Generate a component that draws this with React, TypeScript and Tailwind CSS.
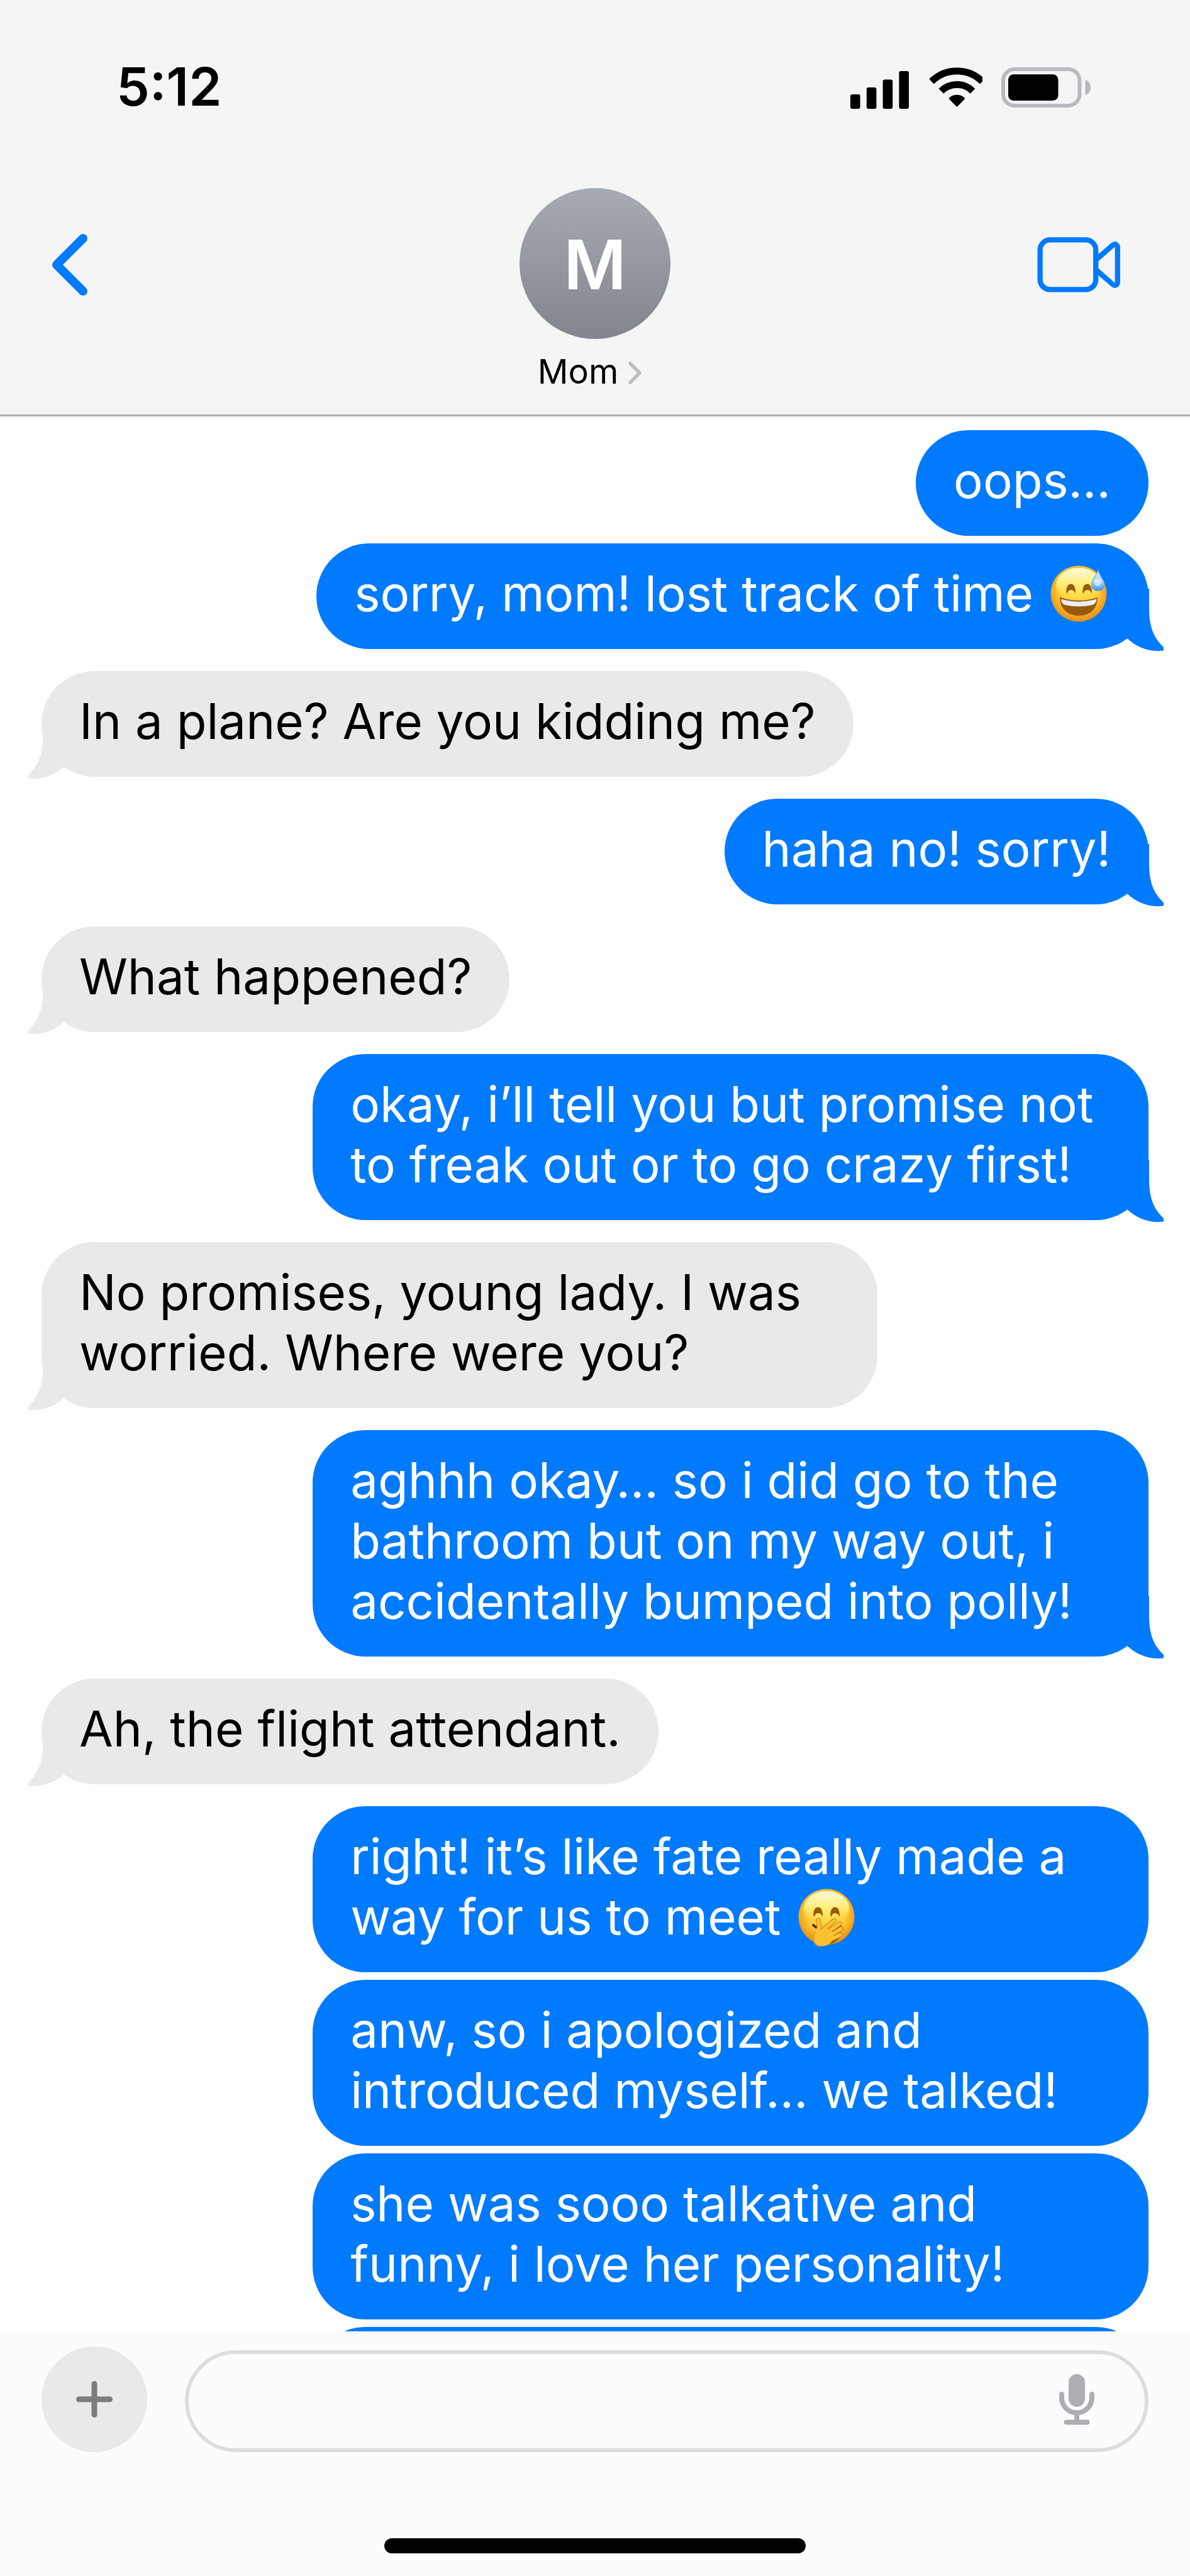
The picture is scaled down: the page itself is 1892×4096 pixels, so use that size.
import type { ReactNode } from "react";
import clsx from "clsx";

type Message = {
  id: number;
  from: "me" | "mom";
  tail?: boolean;
  body: ReactNode;
};

function EyeArc({ x }: { x: number }) {
  return (
    <path
      transform={`translate(${x} 0)`}
      d="M.3 43C0 34 3 29.5 7.7 29.5 12.5 29.5 15.3 35 15 45 13.5 41 11 39 8 39 5 39 2.500 41 1.800 45Z"
      fill="#965a0c"
    />
  );
}

function Face({ id }: { id: string }) {
  return (
    <>
      <defs>
        <radialGradient id={`${id}-base`} cx="0.5" cy="0.42" r="0.6">
          <stop offset="0" stopColor="#ffe04a" />
          <stop offset="0.6" stopColor="#fdcb34" />
          <stop offset="0.82" stopColor="#f4a31f" />
          <stop offset="1" stopColor="#e08a10" />
        </radialGradient>
        <linearGradient id={`${id}-shine`} x1="0" y1="0" x2="0" y2="1">
          <stop offset="0" stopColor="#fffbe0" />
          <stop offset="0.45" stopColor="#fff38a" stopOpacity="0.85" />
          <stop offset="1" stopColor="#ffe14d" stopOpacity="0" />
        </linearGradient>
      </defs>
      <circle cx="46" cy="45" r="44.500" fill={`url(#${id}-base)`} />
      <ellipse cx="46" cy="31" rx="36" ry="27" fill={`url(#${id}-shine)`} />
    </>
  );
}

function SweatSmile() {
  return (
    <svg viewBox="-4 0 101 92" role="img" aria-label="😅" className="inline h-[92px] w-[101px] align-[-19px]">
      <Face id="sweat" />
      <defs>
        <linearGradient id="sweat-drop" x1="0" y1="0" x2="0" y2="1">
          <stop offset="0" stopColor="#cfe8ff" />
          <stop offset="0.55" stopColor="#b5dcff" />
          <stop offset="1" stopColor="#3d8ff0" />
        </linearGradient>
      </defs>
      <EyeArc x={26} />
      <EyeArc x={52} />
      <path d="M16 50.500C34 57.500 58 57.500 76 51 76 69 64 80 46 80S16 68 16 50.500Z" fill="#965a0c" />
      <path d="M18 53.500C36 59 56 59 74.500 53.500 74 60 71 62 67 63 54 66 38 66 25 63 21 62 18.500 60 18 53.500Z" fill="#ececf0" />
      <path d="M76.700 6.300C79 17 86.700 22 86.700 31 86.700 37 82.500 40.500 76.700 40.500S66.700 37 66.700 31C66.700 22 74.500 17 76.700 6.300Z" fill="url(#sweat-drop)" stroke="#4a94ea" strokeWidth="1" />
      <ellipse cx="76" cy="27" rx="5" ry="6" fill="#e4f2ff" opacity="0.7" />
    </svg>
  );
}

const fingers = ["M33 50.500 35.500 68", "M38 68 58 51", "M44 72 67 56", "M48 77 69 64", "M50 82 68 73.500"];

function HandOverMouth() {
  return (
    <svg viewBox="-4 0 101 92" role="img" aria-label="🤭" className="inline h-[92px] w-[101px] align-[-19px]">
      <Face id="hand" />
      <EyeArc x={25} />
      <EyeArc x={52} />
      <path d="M25 58 30 62M54 68 68 59" stroke="#5a3208" strokeWidth="4" strokeLinecap="round" />
      <path d="M50 89C58 87 64 82 68 77L58 74Z" fill="#965a0c" />
      {fingers.map((d) => (
        <g key={d} strokeLinecap="round">
          <path d={d} stroke="#c77a12" strokeWidth="7.500" />
          <path d={d} stroke="#fcc238" strokeWidth="5.500" />
        </g>
      ))}
      <path d="M32.500 60C28 66 25 72 25.500 80 26 88 31 91.500 39 91.500 49 91.500 54 86 58 78L54 66 44 63 37 68Z" fill="#fcc033" />
      <path d="M28 68C25 74 24 82 27.500 87 30 91 35 92 40 91.500" fill="none" stroke="#e0941c" strokeWidth="1.500" />
    </svg>
  );
}

const messages: Message[] = [
  { id: 1, from: "me", body: "oops…" },
  { id: 2, from: "me", tail: true, body: <>sorry, mom! lost track of time <SweatSmile /></> },
  { id: 3, from: "mom", tail: true, body: "In a plane? Are you kidding me?" },
  { id: 4, from: "me", tail: true, body: "haha no! sorry!" },
  { id: 5, from: "mom", tail: true, body: "What happened?" },
  { id: 6, from: "me", tail: true, body: "okay, i’ll tell you but promise not to freak out or to go crazy first!" },
  { id: 7, from: "mom", tail: true, body: "No promises, young lady. I was worried. Where were you?" },
  { id: 8, from: "me", tail: true, body: "aghhh okay… so i did go to the bathroom but on my way out, i accidentally bumped into polly!" },
  { id: 9, from: "mom", tail: true, body: "Ah, the flight attendant." },
  { id: 10, from: "me", body: <>right! it’s like fate really made a way for us to meet <HandOverMouth /></> },
  { id: 11, from: "me", body: "anw, so i apologized and introduced myself… we talked!" },
  { id: 12, from: "me", body: "she was sooo talkative and funny, i love her personality!" },
];

function Tail({ mine }: { mine: boolean }) {
  return (
    <svg
      viewBox="0 0 84 99"
      aria-hidden="true"
      className={clsx(
        "absolute -bottom-[3px] h-[99px] w-[84px]",
        mine ? "-right-6 fill-[#007aff]" : "-left-[21px] -scale-x-100 fill-[#e9e9eb]",
      )}
    >
      <path d="M61 0V31C61 62 69 79 84 93V98.500C62 101 42 94 26 79L14 66V0Z" />
    </svg>
  );
}

function Bubble({ from, tail, body }: Omit<Message, "id">) {
  const mine = from === "me";
  return (
    <li
      className={clsx(
        "relative max-w-[75.5%] rounded-[84px] px-[60px] pt-8 pb-10",
        mine ? "self-end bg-[#007aff] text-white" : "self-start bg-[#e9e9eb] text-black",
        tail ? "mb-[35px]" : "mb-3",
      )}
    >
      {tail && <Tail mine={mine} />}
      <p className="relative">{body}</p>
    </li>
  );
}

function StatusBar() {
  return (
    <div className="flex h-[280px] items-center justify-between pr-[158px] pl-[185px]">
      <time className="pb-1 text-[84px] leading-[96px] font-semibold">5:12</time>
      <div className="flex items-center">
        <svg viewBox="0 0 93 66" className="h-[66px] w-[93px]" aria-label="Signal" role="img">
          <rect x="0" y="43" width="15.600" height="23" rx="3" />
          <rect x="25.800" y="32" width="15.600" height="34" rx="3" />
          <rect x="51.600" y="19.500" width="15.600" height="46.500" rx="3" />
          <rect x="77.400" y="6" width="15.600" height="60" rx="3" />
        </svg>
        <svg viewBox="0 0 84 66" className="ml-[33px] h-[66px] w-[84px]" aria-label="Wi-Fi" role="img">
          <g fill="none" stroke="#000" strokeWidth="11">
            <path d="M3 22.600A57.200 57.200 0 0 1 83.800 22.600" />
            <path d="M18.300 37.900A35.500 35.500 0 0 1 68.500 37.900" />
          </g>
          <path d="M43.400 62 32 50.500C31.300 49.800 31.400 49 32.100 48.500 38.500 43 48.300 43 54.700 48.500 55.400 49 55.500 49.800 54.800 50.500Z" stroke="#000" strokeWidth="1.500" strokeLinejoin="round" />
        </svg>
        <svg viewBox="0 0 142 66" className="ml-[30px] h-[66px] w-[142px]" aria-label="Battery" role="img">
          <rect x="3" y="3" width="121.500" height="58" rx="18" fill="none" stroke="#b9bac0" strokeWidth="6" />
          <rect x="11" y="11.300" width="79.500" height="41.700" rx="8.500" />
          <path d="M133.500 19.700C139 21.500 142 26 142 32S139 42.500 133.500 44.300Z" fill="#b9bac0" />
        </svg>
      </div>
    </div>
  );
}

function Header() {
  return (
    <header className="bg-[#f5f5f5] pb-[3px]">
      <StatusBar />
      <div className="grid grid-cols-[1fr_auto_1fr] border-b-3 border-[#acb0b5] pt-[19px] pr-[107px] pb-8 pl-[79px]">
        <div className="flex h-[240px] items-center pt-1">
          <button type="button" aria-label="Back" className="-mr-7 text-[#007aff]">
            <svg viewBox="79 369 64 106" className="h-[106px] w-16" fill="none" stroke="currentColor" strokeWidth="14" strokeLinecap="round" strokeLinejoin="round">
              <path d="M132 380 90 422 132 464" />
            </svg>
          </button>
        </div>
        <div className="ml-7 flex flex-col items-center">
          <div className="grid size-[240px] place-items-center rounded-full bg-linear-to-b from-[#a7abb4] to-[#83858e] text-[108px] leading-none font-semibold text-white">
            <span className="pt-1">M</span>
          </div>
          <button type="button" className="mt-4 flex items-center text-[54px] leading-[72px]">
            Mom
            <svg viewBox="0 0 38 40" aria-hidden="true" className="mt-1 ml-4 h-10 w-[38px]" fill="none" stroke="#bebebe" strokeWidth="5.500" strokeLinecap="round" strokeLinejoin="round">
              <path d="M3 5 18 20 3 35" />
            </svg>
          </button>
        </div>
        <div className="flex h-[240px] items-center justify-end pt-1">
          <button type="button" aria-label="FaceTime" className="text-[#007aff]">
            <svg viewBox="1649 375 140 96" className="h-24 w-[140px]" fill="none" stroke="currentColor" strokeWidth="8.300" strokeLinejoin="round">
              <rect x="1657.600" y="383.400" width="88.600" height="79" rx="16" />
              <path d="M1746 415.500 1773 392C1777 388.500 1780.800 391 1780.800 396V450C1780.800 455 1777 457.500 1773 454L1746 430.500" />
            </svg>
          </button>
        </div>
      </div>
    </header>
  );
}

function Composer() {
  return (
    <footer className="bg-[#fcfcfc] px-[66px] pt-6 pb-9">
      <form className="flex items-end gap-[60px]" onSubmit={(e) => e.preventDefault()}>
        <button type="button" aria-label="Add attachment" className="grid size-[168px] shrink-0 place-items-center rounded-full bg-[#e9e9eb]">
          <svg viewBox="0 0 60 60" className="size-[60px]" stroke="#7d7d80" strokeWidth="9" strokeLinecap="round">
            <path d="M30 5.500V54.500M5.500 30H54.500" />
          </svg>
        </button>
        <div className="flex h-[162px] flex-1 items-center rounded-full border-6 border-[#ddd] pr-20 pl-[60px]">
          <input type="text" aria-label="Message" className="h-full min-w-0 flex-1 bg-transparent text-[78px] outline-none" />
          <button type="button" aria-label="Dictate">
            <svg viewBox="0 0 56 86" className="h-[86px] w-14" fill="none" stroke="#acaeb4" strokeLinecap="round">
              <rect x="15" y="0" width="26" height="52" rx="13" fill="#acaeb4" stroke="none" />
              <path d="M4 32V37.500A24 24 0 0 0 52 37.500V32M28 62V74M11.500 76.500H44.500" strokeWidth="8" />
            </svg>
          </button>
        </div>
      </form>
      <div className="mx-auto mt-[137px] h-6 w-[38.1%] rounded-full bg-black" />
    </footer>
  );
}

export default function App() {
  return (
    <div className="flex h-screen flex-col bg-white font-['Inter',sans-serif] text-black">
      <Header />
      <main className="min-h-0 flex-1 overflow-hidden px-[66px] pt-[19px]">
        <ul className="flex flex-col text-[78px] leading-[96px]">
          {messages.map(({ id, ...message }) => (
            <Bubble key={id} {...message} />
          ))}
          <li aria-hidden="true" className="h-[168px] w-[75.5%] self-end rounded-[84px] bg-[#007aff]" />
        </ul>
      </main>
      <Composer />
    </div>
  );
}
